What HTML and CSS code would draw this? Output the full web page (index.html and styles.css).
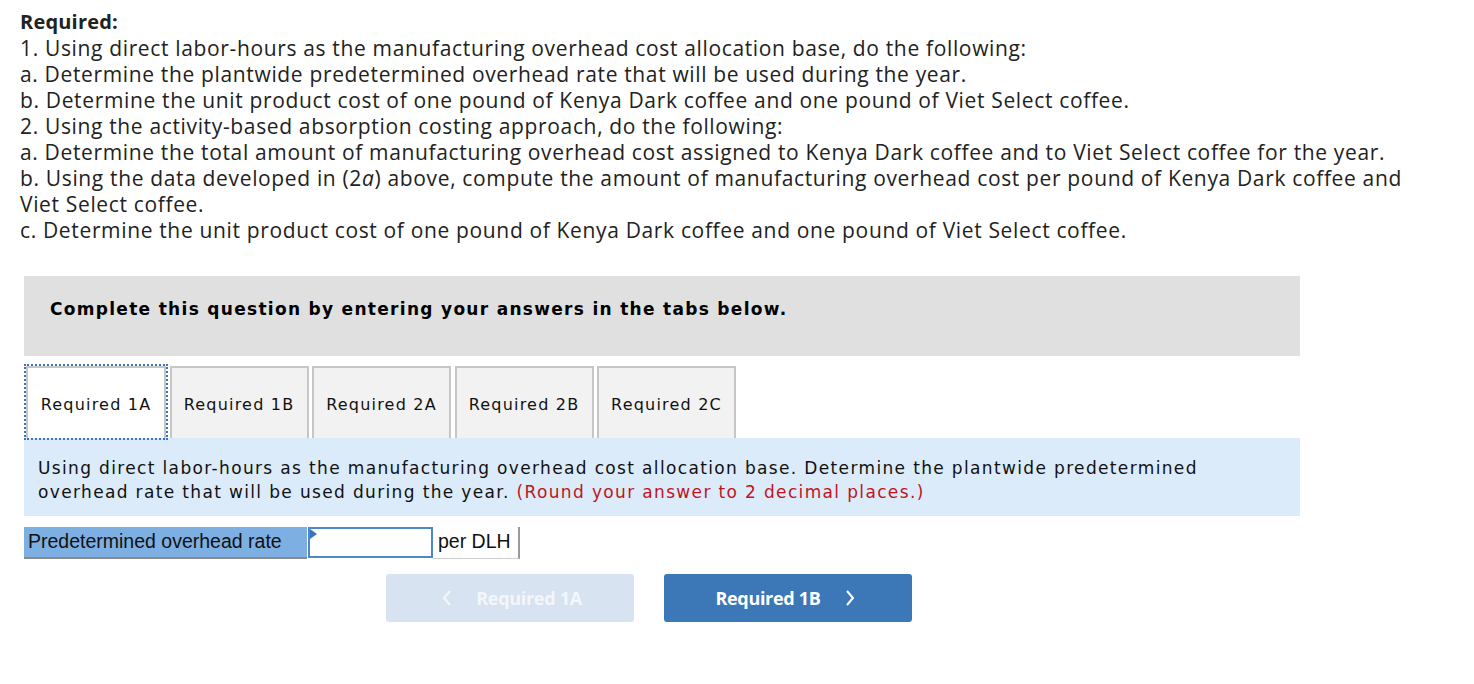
FILE: index.html
```html
<!DOCTYPE html>
<html>
<head>
<meta charset="utf-8">
<link rel="stylesheet" href="styles.css">
</head>
<body>
<div class="required">
  <div class="req-title">Required:</div>
  <div>1. Using direct labor-hours as the manufacturing overhead cost allocation base, do the following:</div>
  <div>a. Determine the plantwide predetermined overhead rate that will be used during the year.</div>
  <div>b. Determine the unit product cost of one pound of Kenya Dark coffee and one pound of Viet Select coffee.</div>
  <div>2. Using the activity-based absorption costing approach, do the following:</div>
  <div>a. Determine the total amount of manufacturing overhead cost assigned to Kenya Dark coffee and to Viet Select coffee for the year.</div>
  <div>b. Using the data developed in (2<i>a</i>) above, compute the amount of manufacturing overhead cost per pound of Kenya Dark coffee and<br>Viet Select coffee.</div>
  <div>c. Determine the unit product cost of one pound of Kenya Dark coffee and one pound of Viet Select coffee.</div>
</div>

<div class="panel">
  <div class="complete">Complete this question by entering your answers in the tabs below.</div>

  <div class="tabs">
    <div class="tab active">Required 1A</div>
    <div class="tab">Required 1B</div>
    <div class="tab">Required 2A</div>
    <div class="tab">Required 2B</div>
    <div class="tab">Required 2C</div>
  </div>

  <div class="instructions">Using direct labor-hours as the manufacturing overhead cost allocation base. Determine the plantwide predetermined<br>overhead rate that will be used during the year. <span class="red">(Round your answer to 2 decimal places.)</span></div>

  <div class="form-row">
    <div class="label-cell">Predetermined overhead rate</div>
    <div class="input-cell"><span class="flag"></span></div>
    <div class="unit-cell">per DLH</div>
  </div>

  <div class="nav">
    <div class="btn btn-prev">
      <svg class="chev" width="10" height="16" viewBox="0 0 10 16"><polyline points="8,1 2,8 8,15" fill="none" stroke="currentColor" stroke-width="2"/></svg>
      <span>Required 1A</span>
    </div>
    <div class="btn btn-next">
      <span>Required 1B</span>
      <svg class="chev" width="10" height="16" viewBox="0 0 10 16"><polyline points="2,1 8,8 2,15" fill="none" stroke="currentColor" stroke-width="2"/></svg>
    </div>
  </div>
</div>
</body>
</html>
```

FILE: styles.css
```css
html, body {
  margin: 0;
  padding: 0;
  background: #fff;
}

.required {
  width: 1415px;
  padding: 9px 0 0 20px;
  font-family: "Open Sans", "Lato", sans-serif;
  font-size: 21px;
  line-height: 26px;
  color: #222;
  letter-spacing: 0.65px;
}

.req-title {
  font-weight: 700;
  font-size: 20px;
  letter-spacing: 0.2px;
}

.required i {
  display: inline-block;
  font-style: italic;
  line-height: 26px;
}

.panel {
  margin: 33px 0 0 24px;
  width: 1276px;
}

.complete {
  background: #e0e0e0;
  height: 80px;
  box-sizing: border-box;
  padding: 22px 0 0 26px;
  font-family: Verdana, "DejaVu Sans", sans-serif;
  font-weight: 700;
  font-size: 17px;
  letter-spacing: 1.3px;
  line-height: 22px;
  color: #000;
}

.tabs {
  display: flex;
  gap: 3.5px;
  margin-top: 10px;
  padding-left: 2px;
}

.tab {
  width: 139px;
  height: 72px;
  box-sizing: border-box;
  border: 2px solid #c6c6c6;
  border-bottom: none;
  background: #f2f2f2;
  display: flex;
  align-items: center;
  justify-content: center;
  font-family: Verdana, "DejaVu Sans", sans-serif;
  font-size: 16px;
  letter-spacing: 1.2px;
  color: #111;
  padding-top: 2px;
}

.tab.active {
  width: 140px;
  background: #fff;
  outline: 2px dotted #3a74c0;
  outline-offset: 0;
}

.instructions {
  background: #dbebf9;
  height: 78px;
  box-sizing: border-box;
  padding: 18px 40px 0 14px;
  font-family: Verdana, "DejaVu Sans", sans-serif;
  font-size: 17px;
  letter-spacing: 1.35px;
  line-height: 24px;
  color: #111;
}

.red {
  display: inline-block;
  line-height: 24px;
  color: #c0141c;
}

.form-row {
  display: flex;
  margin-top: 11px;
  height: 32px;
  font-family: "Liberation Sans", Arial, sans-serif;
  font-size: 19.5px;
}

.label-cell {
  width: 283px;
  background: #7eafe2;
  border-bottom: 2px solid #8a8a8a;
  box-sizing: border-box;
  padding: 3px 0 0 4px;
  color: #111;
}

.input-cell {
  position: relative;
  width: 125px;
  margin-left: 1px;
  height: 31px;
  box-sizing: border-box;
  border: 2px solid #4d87c7;
  background: #fff;
}

.flag {
  position: absolute;
  left: 0;
  top: 0;
  width: 0;
  height: 0;
  border-top: 5px solid transparent;
  border-bottom: 5px solid transparent;
  border-left: 7px solid #3a74c0;
}

.unit-cell {
  width: 87px;
  height: 32px;
  box-sizing: border-box;
  border-right: 2px solid #9a9a9a;
  border-bottom: 1px solid #d0d0d0;
  padding: 3px 0 0 5px;
  color: #111;
}

.nav {
  display: flex;
  gap: 30px;
  margin: 15px 0 0 362px;
}

.btn {
  width: 248px;
  height: 48px;
  border-radius: 3px;
  display: flex;
  align-items: center;
  justify-content: center;
  gap: 24px;
  font-family: "Open Sans", "Lato", sans-serif;
  font-weight: 700;
  font-size: 18px;
  color: #fff;
  letter-spacing: -0.3px;
  box-sizing: border-box;
}

.btn-prev {
  background: #d7e3f0;
  color: #f3f6fa;
  padding-left: 4px;
}

.btn-next {
  background: #3c77b8;
  padding-right: 6px;
}

.chev {
  display: block;
}
```
